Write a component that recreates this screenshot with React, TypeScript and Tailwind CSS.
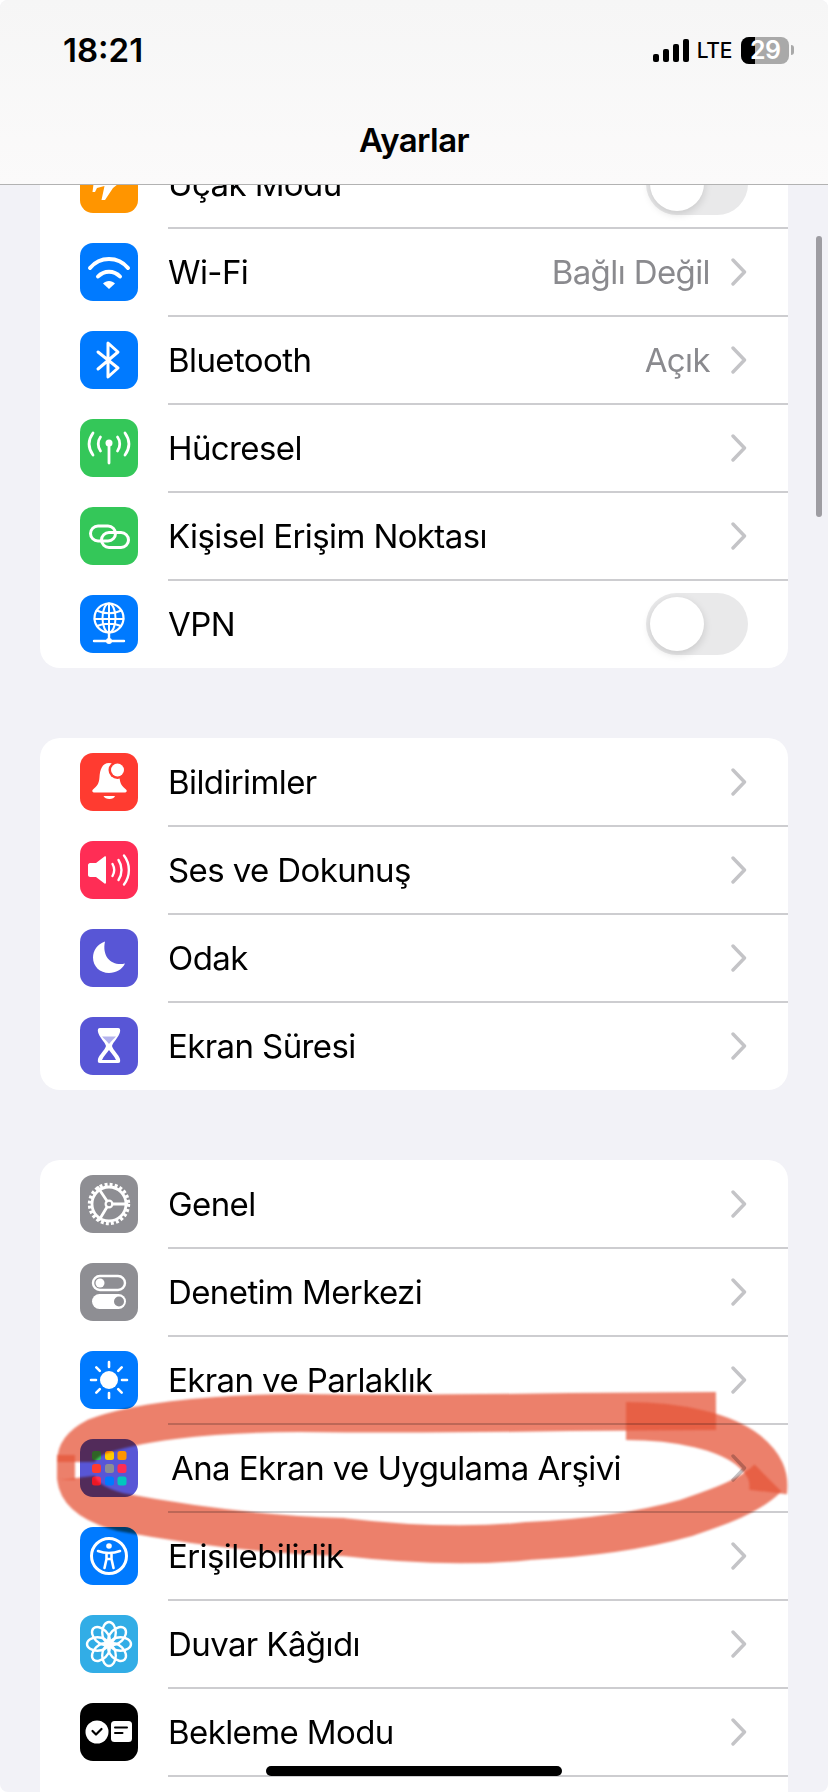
import type { ReactNode } from "react";

const FONT = "font-['Inter','Liberation_Sans',sans-serif]";

function Glyph({ children }: { children: ReactNode }) {
  return (
    <svg viewBox="0 0 58 58" className="h-[58px] w-[58px]" fill="none" stroke="none">
      {children}
    </svg>
  );
}

const line = { stroke: "#fff", strokeLinecap: "round", strokeLinejoin: "round", fill: "none" } as const;

const PlaneIcon = () => (
  <Glyph>
    <path d="M46 17 C48 19 44 25 38 29 L33 33 L25 45 L21.500 45 L24.500 31 L17 33 L15 37 L12.500 37 L13.500 29 L12 22 L14.500 22 L17 26 L27 25 L22 12 L25 12 L34 23 L38 20 C41 17 44 15 46 17Z" fill="#fff" />
  </Glyph>
);

const WifiIcon = () => (
  <Glyph>
    <path d="M10 25 C20 13 38 13 48 25" {...line} strokeWidth="4" />
    <path d="M18 33.500 C24 27 34 27 40 33.500" {...line} strokeWidth="4" />
    <path d="M23 40.500 C26 37 32 37 35 40.500 L29 46Z" fill="#fff" />
  </Glyph>
);

const BluetoothIcon = () => (
  <Glyph>
    <path d="M18 21 L38 37 L28 46 V12 L38 21 L18 38" {...line} strokeWidth="3" />
  </Glyph>
);

const CellularIcon = () => (
  <Glyph>
    <circle cx="29" cy="24" r="3.500" fill="#fff" />
    <path d="M29 25 V44" {...line} strokeWidth="2.800" />
    <path d="M13 14 C8 21 8 29 13 36 M45 14 C50 21 50 29 45 36" {...line} strokeWidth="2.800" />
    <path d="M20.500 18 C17.500 22 17.500 28 20.500 32 M37.500 18 C40.500 22 40.500 28 37.500 32" {...line} strokeWidth="2.800" />
  </Glyph>
);

const LinkIcon = () => (
  <Glyph>
    <rect x="10.500" y="19" width="25" height="15" rx="7.500" {...line} strokeWidth="3" />
    <rect x="21.500" y="25.500" width="27" height="15" rx="7.500" {...line} strokeWidth="3" />
  </Glyph>
);

const GlobeIcon = () => (
  <Glyph>
    <circle cx="29" cy="23" r="14.500" {...line} strokeWidth="2.200" />
    <ellipse cx="29" cy="23" rx="6.500" ry="14.500" {...line} strokeWidth="2" />
    <path d="M29 8.500 V37.500 M16.500 15.500 C24 19 34 19 41.500 15.500 M14.500 24 H43.500 M17 31 C24 28 34 28 41 31" {...line} strokeWidth="2" />
    <path d="M29 38 V45 M14 46 H44" {...line} strokeWidth="2.400" />
    <circle cx="29" cy="46" r="3" fill="#fff" />
  </Glyph>
);

const BellIcon = () => (
  <Glyph>
    <path d="M29 10 C22 10 20 17 19.500 24 C19 31 17 33 12.500 37 C12 38 12.500 39.500 14 39.500 H45 C46.500 39.500 47 38 46.500 37 C42 33 40 31 39.500 24 C39 17 36 10 29 10Z" fill="#fff" />
    <path d="M23.500 43 H35 C34 47 25 47 23.500 43Z" fill="#fff" />
    <circle cx="37.500" cy="17" r="9" fill="#ff3b30" />
    <circle cx="37.500" cy="17" r="6.500" fill="#fff" />
  </Glyph>
);

const SoundIcon = () => (
  <Glyph>
    <path d="M10 22 H16 L24.500 15.500 C25.500 15 26 15.500 26 16.500 V41.500 C26 42.500 25.500 43 24.500 42.500 L16 36 H10 C9 36 8 35 8 34 V24 C8 23 9 22 10 22Z" fill="#fff" />
    <path d="M32.500 23 C34.500 26.500 34.500 31.500 32.500 35" {...line} strokeWidth="2.400" />
    <path d="M38.500 19 C42.500 25 42.500 33 38.500 39" {...line} strokeWidth="2.400" />
    <path d="M44 14.500 C50.500 23 50.500 35 44 43.500" {...line} strokeWidth="2.400" />
  </Glyph>
);

const MoonIcon = () => (
  <Glyph>
    <path d="M25 12.500 C17 15 13 22 13 28.500 C13 37.500 20 44 29 44 C36 44 42 40.500 45 34.500 C33 37.500 21.500 29 25 12.500Z" fill="#fff" />
  </Glyph>
);

const HourglassIcon = () => (
  <Glyph>
    <path d="M20 11 H38 C40 11 40.500 12.500 40 15 C39 20 33 25 32 29 C33 33 39 38 40 42 C40.500 45 40 46 38 46 H20 C18 46 17.500 45 18 42 C19 38 25 33 26 29 C25 25 19 20 18 15 C17.500 12.500 18 11 20 11Z" fill="#fff" />
    <path d="M22 19.500 H36 C34 22 31 24 29 27 C27 24 24 22 22 19.500Z" fill="#5856d6" opacity="0.45" />
    <path d="M29 33 C31 36 34.500 39 36 43 H22 C23.500 39 27 36 29 33Z" fill="#5856d6" />
  </Glyph>
);

const GearIcon = () => (
  <Glyph>
    <circle cx="29" cy="29" r="17" {...line} strokeWidth="2.800" />
    <circle cx="29" cy="29" r="19.200" stroke="#fff" strokeWidth="4" strokeDasharray="2.900 2.130" />
    <path d="M27 26 L18 12.500 M32.500 29 H47 M27 32 L19.500 44.500" {...line} strokeWidth="2.800" />
    <circle cx="29" cy="29" r="3.400" {...line} strokeWidth="2.200" />
  </Glyph>
);

const ControlsIcon = () => (
  <Glyph>
    <rect x="13" y="13" width="32" height="14" rx="7" {...line} strokeWidth="2.400" />
    <circle cx="20" cy="20" r="4.500" fill="#fff" />
    <rect x="12" y="31" width="34" height="15" rx="7.500" fill="#fff" />
    <circle cx="39" cy="38.500" r="5" fill="#8e8e93" />
  </Glyph>
);

const SunIcon = () => (
  <Glyph>
    <circle cx="29" cy="29" r="9" fill="#fff" />
    <path d="M29 11 V16 M29 42 V47 M11 29 H16 M42 29 H47 M16.300 16.300 L19.800 19.800 M38.200 38.200 L41.700 41.700 M41.700 16.300 L38.200 19.800 M19.800 38.200 L16.300 41.700" {...line} strokeWidth="2.600" />
  </Glyph>
);

const GridIcon = () => {
  const dots = [
    ["#34c759", 12, 12],
    ["#ffcc00", 25, 12],
    ["#ff9500", 37.500, 12],
    ["#ff3b30", 12, 25],
    ["#8e8e93", 25, 25],
    ["#ff2d55", 37.500, 25],
    ["#ff2d55", 12, 37.500],
    ["#007aff", 25, 37.500],
    ["#00c7be", 37.500, 37.500],
  ] as const;
  return (
    <Glyph>
      {dots.map(([c, x, y]) => (
        <rect key={`${x}-${y}`} x={x} y={y} width="9" height="9" rx="2.500" fill={c} />
      ))}
    </Glyph>
  );
};

const AccessIcon = () => (
  <Glyph>
    <circle cx="29" cy="29" r="17.500" {...line} strokeWidth="3" />
    <circle cx="29" cy="19" r="2.800" fill="#fff" />
    <path d="M18 24 C22 25.500 25 26 29 26 C33 26 36 25.500 40 24 M26.500 26 V32 L24.500 41 M31.500 26 V32 L33.500 41 M26.500 32 H31.500" {...line} strokeWidth="2.600" />
  </Glyph>
);

const FlowerIcon = () => (
  <Glyph>
    {[0, 45, 90, 135, 180, 225, 270, 315].map((deg) => (
      <ellipse key={deg} cx="29" cy="17.500" rx="6.800" ry="10.500" transform={`rotate(${deg} 29 29)`} {...line} strokeWidth="2.400" />
    ))}
    <circle cx="29" cy="29" r="3.500" fill="#fff" />
  </Glyph>
);

const StandbyIcon = () => (
  <Glyph>
    <circle cx="17" cy="29" r="11.500" fill="#fff" />
    <path d="M12.500 28 L16 31.500 L21.500 26" stroke="#000" strokeWidth="2.200" strokeLinecap="round" strokeLinejoin="round" />
    <rect x="31" y="18" width="21" height="21" rx="3.500" fill="#fff" />
    <path d="M35 24.500 H47 M35 30 H42.500" stroke="#000" strokeWidth="2" strokeLinecap="round" />
  </Glyph>
);

function Chevron() {
  return (
    <svg viewBox="0 0 16 28" className="h-[28px] w-[16px] shrink-0" fill="none">
      <path d="M2 2 L13.500 14 L2 26" stroke="#c4c4c7" strokeWidth="3.400" strokeLinecap="round" strokeLinejoin="round" />
    </svg>
  );
}

function Toggle() {
  return (
    <div className="flex h-[62px] w-[102px] items-center rounded-full bg-[#e9e9ea] pl-[4px]">
      <div className="h-[54px] w-[54px] rounded-full bg-white shadow-[0_3px_8px_rgba(0,0,0,0.14)]" />
    </div>
  );
}

interface Row {
  label: string;
  color: string;
  icon: ReactNode;
  value?: string;
  toggle?: boolean;
  nudge?: boolean;
}

function SettingRow({ row, first }: { row: Row; first: boolean }) {
  return (
    <div className="flex h-[88px] items-center pl-[40px]">
      <div className={`h-[58px] w-[58px] shrink-0 rounded-[13px] ${row.color}`}>{row.icon}</div>
      <div
        className={`ml-[30px] flex h-full flex-1 -translate-y-[1px] items-center justify-between border-t-2 ${
          first ? "border-transparent" : "border-[#cdcdd0]"
        } ${row.toggle ? "pr-[40px]" : "pr-[41px]"}`}
      >
        <span className={`text-[33px] leading-none tracking-[-0.6px] text-black ${row.nudge ? "ml-[3px]" : ""}`}>{row.label}</span>
        {row.toggle ? (
          <Toggle />
        ) : (
          <div className="flex items-center gap-[21px]">
            {row.value && <span className="text-[33px] leading-none tracking-[-0.6px] text-[#8a8a8e]">{row.value}</span>}
            <Chevron />
          </div>
        )}
      </div>
    </div>
  );
}

const groups: Row[][] = [
  [
    { label: "Uçak Modu", color: "bg-[#ff9500]", icon: <PlaneIcon />, toggle: true },
    { label: "Wi-Fi", color: "bg-[#007aff]", icon: <WifiIcon />, value: "Bağlı Değil" },
    { label: "Bluetooth", color: "bg-[#007aff]", icon: <BluetoothIcon />, value: "Açık" },
    { label: "Hücresel", color: "bg-[#34c759]", icon: <CellularIcon /> },
    { label: "Kişisel Erişim Noktası", color: "bg-[#34c759]", icon: <LinkIcon /> },
    { label: "VPN", color: "bg-[#007aff]", icon: <GlobeIcon />, toggle: true },
  ],
  [
    { label: "Bildirimler", color: "bg-[#ff3b30]", icon: <BellIcon /> },
    { label: "Ses ve Dokunuş", color: "bg-[#ff2d55]", icon: <SoundIcon /> },
    { label: "Odak", color: "bg-[#5856d6]", icon: <MoonIcon /> },
    { label: "Ekran Süresi", color: "bg-[#5856d6]", icon: <HourglassIcon /> },
  ],
  [
    { label: "Genel", color: "bg-[#8e8e93]", icon: <GearIcon /> },
    { label: "Denetim Merkezi", color: "bg-[#8e8e93]", icon: <ControlsIcon /> },
    { label: "Ekran ve Parlaklık", color: "bg-[#007aff]", icon: <SunIcon /> },
    { label: "Ana Ekran ve Uygulama Arşivi", color: "bg-[#5856d6]", icon: <GridIcon />, nudge: true },
    { label: "Erişilebilirlik", color: "bg-[#007aff]", icon: <AccessIcon /> },
    { label: "Duvar Kâğıdı", color: "bg-[#32ade6]", icon: <FlowerIcon /> },
    { label: "Bekleme Modu", color: "bg-black", icon: <StandbyIcon /> },
    { label: "", color: "bg-white", icon: null },
  ],
];

function StatusBar() {
  return (
    <div className="flex items-center justify-between pl-[63px] pr-[34px] pt-[34px]">
      <span className="text-[33px] font-semibold leading-[32px] text-black">18:21</span>
      <div className="flex items-center">
        <div className="flex items-end gap-[4px]">
          <div className="h-[8px] w-[6px] rounded-[2px] bg-black" />
          <div className="h-[13px] w-[6px] rounded-[2px] bg-black" />
          <div className="h-[18px] w-[6px] rounded-[2px] bg-black" />
          <div className="h-[23px] w-[6px] rounded-[2px] bg-black" />
        </div>
        <span className="ml-[8px] text-[21px] font-medium leading-none tracking-[-0.3px] text-black">LTE</span>
        <div className="relative ml-[9px] flex h-[27px] w-[48px] rounded-[8px] bg-[#a9a9a9]">
          <div className="h-full w-[14px] rounded-l-[8px] bg-black" />
          <span className="absolute left-[9px] top-0 text-[25px] font-semibold leading-[27px] tracking-[-0.5px] text-white">29</span>
        </div>
        <div className="ml-[2px] h-[10px] w-[3px] rounded-r-[3px] bg-[#a9a9a9]" />
      </div>
    </div>
  );
}

// el yazisi isaret: yollar ayni svg icinde, ustuste gelen yerler hafif koyulasir
const strokes = [
  { d: "M716 1411 L570 1412 C450 1414 380 1414 300 1413 C200 1413 130 1424 96 1437 C84 1443 76 1450 76 1462", w: 38 },
  { d: "M76 1478 C78 1494 94 1505 120 1512 C200 1527 270 1535 343 1537 C420 1546 480 1546 528 1541 C590 1538 640 1531 686 1518 C712 1509 748 1498 768 1478", w: 38 },
  { d: "M66 1455 V1480", w: 18 },
  { d: "M768 1492 C770 1476 765 1464 748 1450 C725 1432 680 1421 626 1421", w: 38 },
];

export default function App() {
  return (
    <div className={`relative h-[1792px] w-[828px] overflow-hidden rounded-[8px] bg-[#f2f2f7] ${FONT}`}>
      <div className="flex flex-col gap-[70px] px-[40px] pt-[140px]">
        {groups.map((rows, i) => (
          <div key={i} className="overflow-hidden rounded-[20px] bg-white">
            {rows.map((row, j) => (
              <SettingRow key={row.label || j} row={row} first={j === 0} />
            ))}
          </div>
        ))}
      </div>

      <svg viewBox="0 0 828 1792" className="pointer-events-none absolute inset-0 h-[1792px] w-[828px] mix-blend-multiply blur-[1px]" fill="none">
        {strokes.map((s) => (
          <path key={s.d} d={s.d} stroke="#e5563a" strokeOpacity="0.75" strokeWidth={s.w} />
        ))}
      </svg>

      <div className="absolute left-0 right-0 top-0 h-[185px] border-b border-[#b2b2b2] bg-gradient-to-b from-[#f6f6f6] to-[#fbfafa]">
        <StatusBar />
        <div className="mt-[55px] text-center text-[33px] font-semibold leading-[38px] tracking-[-0.6px] text-black">Ayarlar</div>
      </div>

      <div className="absolute left-[816px] top-[236px] h-[281px] w-[6px] rounded-full bg-[#9e9da2]" />
      <div className="absolute left-[266px] top-[1766px] h-[10px] w-[296px] rounded-full bg-black" />
    </div>
  );
}
